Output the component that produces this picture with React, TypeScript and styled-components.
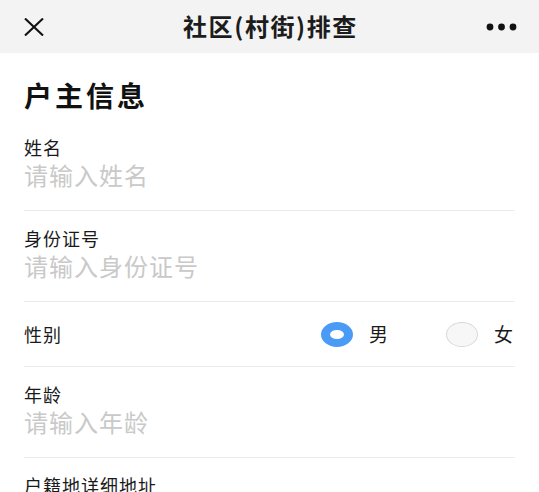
import styled, { createGlobalStyle } from 'styled-components'

const GlobalStyle = createGlobalStyle`
  html, body {
    margin: 0;
    padding: 0;
    background: #ffffff;
  }
  body {
    font-family: "Noto Sans CJK SC", "Noto Sans", sans-serif;
    color: #1a1a1a;
  }
`

const Page = styled.div`
  width: 539px;
  min-height: 492px;
  background: #ffffff;
`

const NavBar = styled.header`
  height: 53px;
  background: #f3f3f3;
  display: grid;
  grid-template-columns: 1fr auto 1fr;
  align-items: center;
  padding: 0 22px 0 24px;
  box-sizing: border-box;
`

const NavLeft = styled.div`
  display: flex;
  align-items: center;
`

const NavRight = styled.div`
  display: flex;
  justify-content: flex-end;
  align-items: center;
`

const NavTitle = styled.h1`
  margin: 0 0 1px;
  font-size: 24px;
  font-weight: 700;
  line-height: 30px;
  letter-spacing: 1.6px;
  color: #1c1c1c;
`

const IconButton = styled.button`
  border: none;
  background: none;
  padding: 0;
  display: flex;
  align-items: center;
  cursor: pointer;
`

const Content = styled.main`
  padding: 0 24px;
`

const SectionTitle = styled.h2`
  margin: 0;
  padding: 24px 0 7px;
  font-size: 28px;
  line-height: 36px;
  font-weight: 700;
  letter-spacing: 3px;
  color: #111;
`

const Field = styled.div`
  padding: 15px 0 20px;
  border-bottom: 1px solid #ececec;
`

const Label = styled.label`
  display: block;
  font-size: 18px;
  line-height: 24px;
  letter-spacing: 1px;
  color: #1a1a1a;
`

const Input = styled.input`
  display: block;
  width: 100%;
  margin-top: 1px;
  padding: 0;
  border: none;
  outline: none;
  background: transparent;
  font-family: "Noto Sans CJK SC", "Noto Sans", sans-serif;
  font-size: 24px;
  line-height: 30px;
  height: 30px;
  letter-spacing: 1px;
  color: #1a1a1a;

  &::placeholder {
    color: #c9c9c9;
  }
`

const InlineRow = styled.div`
  height: 64px;
  display: flex;
  align-items: center;
  justify-content: space-between;
  border-bottom: 1px solid #ececec;
`

const RadioGroup = styled.div`
  display: flex;
  align-items: center;
  gap: 58px;
  padding-right: 2px;
`

const RadioOption = styled.label`
  display: flex;
  align-items: center;
  gap: 16px;
  font-size: 19px;
  line-height: 24px;
  color: #1a1a1a;
  cursor: pointer;
`

const RadioMark = styled.span<{ $checked?: boolean }>`
  box-sizing: border-box;
  width: 32px;
  height: 25px;
  border-radius: 50%;
  background: ${({ $checked }) => ($checked ? '#ffffff' : '#f7f7f7')};
  border: ${({ $checked }) => ($checked ? '8px solid #4a9bf6' : '1px solid #d8d8d8')};
  border-left-width: ${({ $checked }) => ($checked ? '9px' : '1px')};
  border-right-width: ${({ $checked }) => ($checked ? '9px' : '1px')};
`

const CloseIcon = () => (
  <svg width="20" height="18" viewBox="0 0 20 18" fill="none">
    <path d="M1 0.5 L19 17.5 M19 0.5 L1 17.5" stroke="#111" strokeWidth="2.1" />
  </svg>
)

const MoreIcon = () => (
  <svg width="31" height="8" viewBox="0 0 31 8" fill="#111">
    <circle cx="4" cy="4" r="3.4" />
    <circle cx="15.5" cy="4" r="3.4" />
    <circle cx="27" cy="4" r="3.4" />
  </svg>
)

const fields = [
  { id: 'name', label: '姓名', placeholder: '请输入姓名' },
  { id: 'idcard', label: '身份证号', placeholder: '请输入身份证号' },
]

const moreFields = [
  { id: 'age', label: '年龄', placeholder: '请输入年龄' },
  { id: 'address', label: '户籍地详细地址', placeholder: '请输入户籍地详细地址' },
]

const App = () => {
  return (
    <Page>
      <GlobalStyle />
      <NavBar>
        <NavLeft>
          <IconButton aria-label="关闭">
            <CloseIcon />
          </IconButton>
        </NavLeft>
        <NavTitle>社区(村街)排查</NavTitle>
        <NavRight>
          <IconButton aria-label="更多">
            <MoreIcon />
          </IconButton>
        </NavRight>
      </NavBar>

      <Content>
        <SectionTitle>户主信息</SectionTitle>

        {fields.map(field => (
          <Field key={field.id}>
            <Label htmlFor={field.id}>{field.label}</Label>
            <Input id={field.id} placeholder={field.placeholder} />
          </Field>
        ))}

        <InlineRow>
          <Label as="span">性别</Label>
          <RadioGroup>
            <RadioOption>
              <RadioMark $checked />
              男
            </RadioOption>
            <RadioOption>
              <RadioMark />
              女
            </RadioOption>
          </RadioGroup>
        </InlineRow>

        {moreFields.map(field => (
          <Field key={field.id}>
            <Label htmlFor={field.id}>{field.label}</Label>
            <Input id={field.id} placeholder={field.placeholder} />
          </Field>
        ))}
      </Content>
    </Page>
  )
}

export default App
